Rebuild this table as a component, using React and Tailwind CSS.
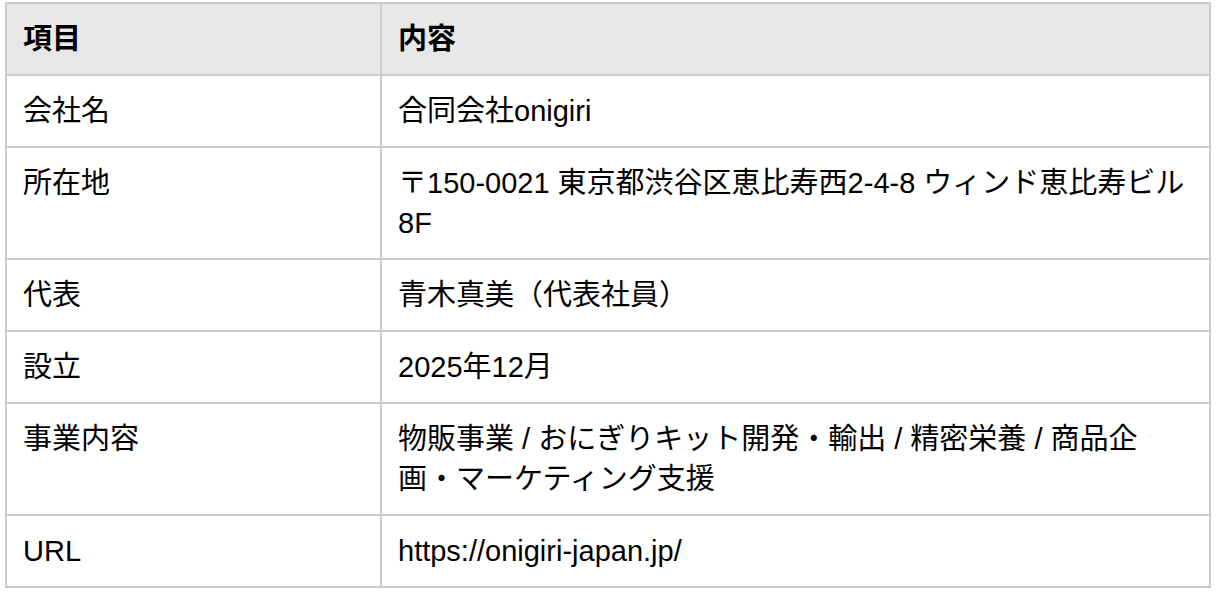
import React from "react";

const rows = [
  { label: "会社名", value: "合同会社onigiri" },
  { label: "所在地", value: "〒150-0021 東京都渋谷区恵比寿西2-4-8 ウィンド恵比寿ビル 8F" },
  { label: "代表", value: "青木真美（代表社員）" },
  { label: "設立", value: "2025年12月" },
  { label: "事業内容", value: "物販事業 / おにぎりキット開発・輸出 / 精密栄養 / 商品企画・マーケティング支援" },
  { label: "URL", value: "https://onigiri-japan.jp/" },
];

export default function App() {
  return (
    <div className="min-h-[592px] bg-white pt-[2px] pl-[5px] font-['Liberation_Sans','Noto_Sans_CJK_JP',sans-serif] text-black">
      <table className="w-[1206px] table-fixed border-collapse text-[29px] leading-[40px]">
        <colgroup>
          <col className="w-[375px]" />
          <col />
        </colgroup>
        <thead>
          <tr className="bg-[#e8e8e8]">
            <th className="border-2 border-[#cccccc] px-4 py-[15px] text-left font-bold">項目</th>
            <th className="border-2 border-[#cccccc] px-4 py-[15px] text-left font-bold">内容</th>
          </tr>
        </thead>
        <tbody>
          {rows.map((row) => (
            <tr key={row.label}>
              <td className="border-2 border-[#cccccc] px-4 py-[15px] align-top">{row.label}</td>
              <td className="border-2 border-[#cccccc] px-4 py-[15px] align-top">{row.value}</td>
            </tr>
          ))}
        </tbody>
      </table>
    </div>
  );
}
